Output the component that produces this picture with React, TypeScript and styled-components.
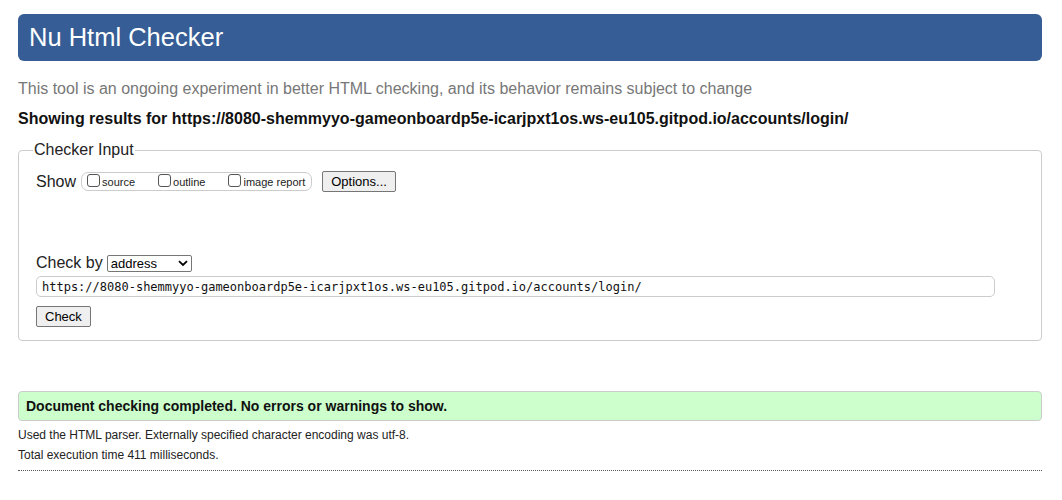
import React from 'react';
import styled, { createGlobalStyle } from 'styled-components';

const Global = createGlobalStyle`
    body {
        margin: 0;
        background: #fff;
        font-family: 'Liberation Sans', Arial, sans-serif;
        color: #000;
    }
`;

const Page = styled.div`
    width: 1024px;
    padding: 14px 20px 0 18px;
`;

const Header = styled.h1`
    margin: 0;
    height: 47px;
    padding-left: 11px;
    display: flex;
    align-items: center;
    background: #365d95;
    border-radius: 6px;
    color: #fff;
    font-weight: normal;
    font-size: 25.5px;
`;

const Intro = styled.p`
    margin: 18px 0 0;
    font-size: 16px;
    line-height: 20px;
    color: #777;
`;

const Results = styled.p`
    margin: 10px 0 0;
    font-size: 16px;
    line-height: 20px;
    font-weight: bold;
    color: #111;
`;

const Fieldset = styled.fieldset`
    margin: 12px 0 0;
    padding: 8px 17px 13px;
    border: 1px solid #ccc;
    border-radius: 4px;
    display: flex;
    flex-direction: column;
    align-items: flex-start;
    min-width: 0;
`;

const Legend = styled.legend`
    padding: 0 1px;
    margin-left: -3px;
    font-size: 16px;
    line-height: 18px;
    color: #222;
`;

const Row = styled.div<{ $top?: number }>`
    display: flex;
    align-items: center;
    margin-top: ${(p) => p.$top ?? 0}px;
    font-size: 16px;
    color: #222;
`;

const Group = styled.span`
    display: inline-flex;
    align-items: center;
    height: 17px;
    margin-left: 5px;
    padding: 0 6px 0 5px;
    border: 1px solid #ccc;
    border-radius: 7px;
`;

const Choice = styled.label<{ $gap?: number }>`
    display: inline-flex;
    align-items: center;
    margin-left: ${(p) => p.$gap ?? 0}px;
    font-size: 11px;
    color: #222;
`;

const Box = styled.input.attrs({ type: 'checkbox' })`
    appearance: none;
    width: 13px;
    height: 13px;
    margin: 0 2px 2px 0;
    border: 1px solid #555;
    border-radius: 3px;
    background: #fff;
`;

const Button = styled.button<{ $left?: number; $top?: number }>`
    margin-left: ${(p) => p.$left ?? 0}px;
    margin-top: ${(p) => p.$top ?? 0}px;
    height: 21px;
    padding: 0 8px;
    font-family: 'Liberation Sans', Arial, sans-serif;
    font-size: 13px;
    color: #000;
    background: #efefef;
    border: 1px solid #767676;
    border-radius: 2px;
`;

const Select = styled.span`
    display: inline-flex;
    align-items: center;
    justify-content: space-between;
    height: 17px;
    margin-left: 4px;
    padding: 0 3px;
    box-sizing: border-box;
    width: 85px;
    border: 1px solid #767676;
    border-radius: 2px;
    font-size: 13px;
    color: #000;
    background: #fff;
`;

const Url = styled.div`
    box-sizing: border-box;
    width: 959px;
    height: 21px;
    margin-top: 4px;
    padding: 0 5px;
    display: flex;
    align-items: center;
    border: 1px solid #ccc;
    border-radius: 5px;
    font-family: 'DejaVu Sans Mono', 'Liberation Mono', monospace;
    font-size: 12px;
    color: #111;
`;

const Success = styled.div`
    margin-top: 50px;
    height: 28px;
    padding-left: 7px;
    display: flex;
    align-items: center;
    background: #ccffcc;
    border: 1px solid #ccc;
    border-radius: 4px;
    font-size: 14px;
    font-weight: bold;
    color: #111;
`;

const Note = styled.p<{ $top: number }>`
    margin: ${(p) => p.$top}px 0 0;
    font-size: 12px;
    line-height: 14px;
    color: #222;
`;

const Rule = styled.hr`
    margin: 8px 0 0;
    border: 0;
    border-top: 1px dotted #555;
`;

const Chevron = () => (
    <svg width="10" height="7" viewBox="0 0 10 7">
        <path d="M1 1.2 L5 5 L9 1.2" fill="none" stroke="#000" strokeWidth="1.8" />
    </svg>
);

const url = 'https://8080-shemmyyo-gameonboardp5e-icarjpxt1os.ws-eu105.gitpod.io/accounts/login/';

export default function App() {
    return (
        <>
            <Global />
            <Page>
                <Header>Nu Html Checker</Header>
                <Intro>
                    This tool is an ongoing experiment in better HTML checking, and its behavior remains subject to change
                </Intro>
                <Results>Showing results for {url}</Results>
                <Fieldset>
                    <Legend>Checker Input</Legend>
                    <Row $top={4}>
                        Show
                        <Group>
                            <Choice>
                                <Box />
                                source
                            </Choice>
                            <Choice $gap={23}>
                                <Box />
                                outline
                            </Choice>
                            <Choice $gap={23}>
                                <Box />
                                image report
                            </Choice>
                        </Group>
                        <Button $left={10}>Options...</Button>
                    </Row>
                    <Row $top={62}>
                        Check by
                        <Select>
                            address
                            <Chevron />
                        </Select>
                    </Row>
                    <Url>{url}</Url>
                    <Button $top={9}>Check</Button>
                </Fieldset>
                <Success>Document checking completed. No errors or warnings to show.</Success>
                <Note $top={7}>Used the HTML parser. Externally specified character encoding was utf-8.</Note>
                <Note $top={6}>Total execution time 411 milliseconds.</Note>
                <Rule />
            </Page>
        </>
    );
}
